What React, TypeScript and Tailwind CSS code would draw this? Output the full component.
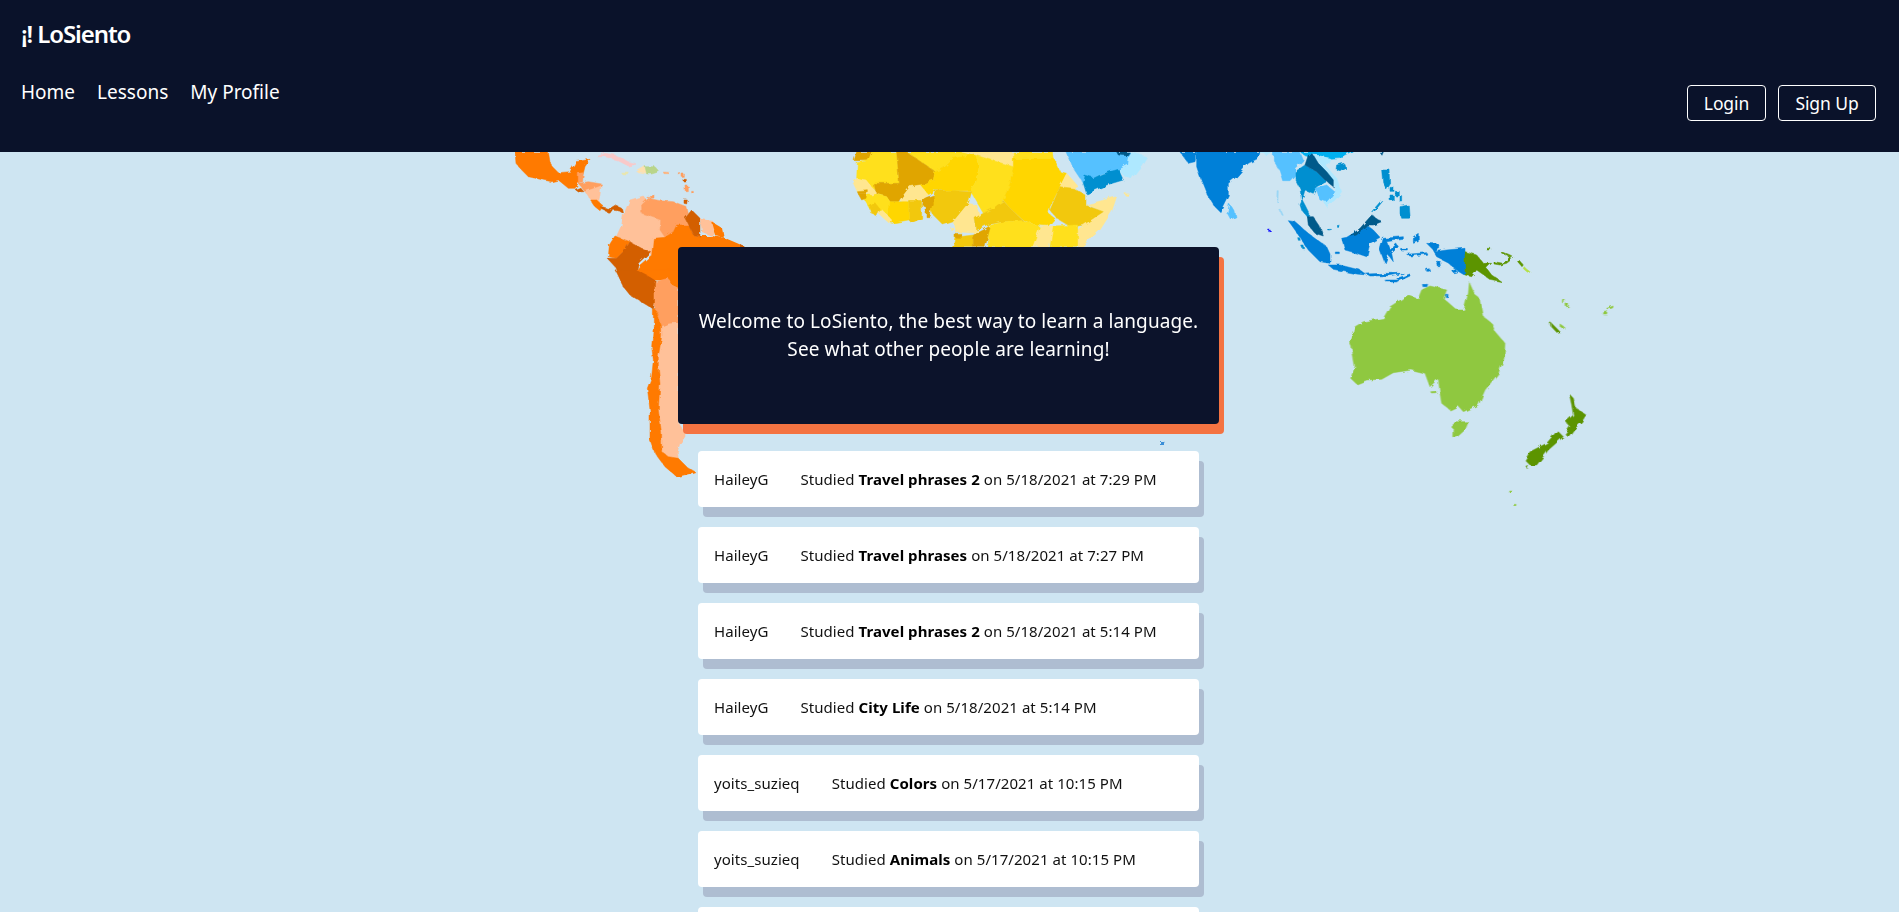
const O = "#ff7a00";
const OD = "#d35f00";
const OM = "#ff9f5f";
const OL = "#ffc199";
const Y = "#ffe01b";
const YM = "#ffd600";
const YG = "#f2c80f";
const YD = "#e0a500";
const YL = "#ffe690";
const B = "#0080d8";
const BM = "#008fd0";
const BD = "#005a8a";
const BL = "#55c1ff";
const BP = "#aee8ff";
const BC = "#00b0f0";
const G = "#8fc83f";
const GD = "#5c9400";

type Shape = [string, string];

// traced from crops, coordinates are crop pixels (3x)
const americas: Shape[] = [
  [O, "45,6 145,6 150,35 162,55 175,68 210,65 228,35 270,28 255,50 250,70 235,100 225,115 205,115 175,90 155,95 130,90 85,80 60,55 48,40"],
  [OM, "235,70 250,68 248,95 235,98"],
  [OD, "225,118 240,112 252,125 235,126"],
  [OM, "235,100 265,95 305,102 295,118 270,120 255,125"],
  [OL, "255,125 275,118 303,108 300,135 295,158 272,150"],
  [O, "272,150 290,150 310,168 300,182 285,170"],
  [OD, "300,170 325,178 345,166 365,175 368,188 355,180 338,178 330,190 310,180"],
  ["#f9c9c9", "290,20 315,10 345,15 385,35 410,42 385,48 350,30 315,20"],
  ["#fde0b0", "410,65 435,50 440,70"],
  ["#b9d58a", "435,50 465,50 478,65 455,72 440,72"],
  ["#e8e6b0", "362,66 385,66 382,72 366,72"],
  ["#ffb27a", "490,66 510,67 508,71 492,71"],
  [OM, "535,68 541,68 541,74 535,74"],
  [OM, "546,72 553,72 553,82 546,82"],
  [OD, "552,88 559,88 559,96 552,96"],
  [OM, "555,105 562,105 562,122 555,122"],
  [OM, "575,124 580,124 580,129 575,129"],
  [OD, "552,150 562,150 560,162 552,160"],
  [OM, "450,140 462,134 462,144 452,145"],
  [OL, "390,150 430,138 440,150 425,170 425,190 482,210 480,240 495,262 460,265 455,315 425,295 390,275 350,258 365,225 370,195"],
  [OM, "425,165 445,145 480,152 520,155 560,170 565,190 555,205 565,225 530,225 520,245 495,262 480,240 482,210 425,190"],
  [O, "600,258 580,255 565,225 530,225 520,245 495,262 460,265 455,315 420,345 410,360 425,385 445,390 600,390"],
  [OD, "575,180 600,205 600,258 580,255 565,225 555,205"],
  [O, "345,258 390,275 375,300 350,325 325,320 328,285"],
  [OD, "390,275 425,295 452,305 415,340 410,360 425,385 440,390 360,390 345,350 322,325 350,325 375,300"],
];

const southCone: Shape[] = [
  [OD, "75,0 140,0 195,30 200,85 190,118 170,105 120,75 100,50"],
  [O, "140,0 265,0 265,55 245,45 235,25 195,30 175,15"],
  [OM, "195,35 235,25 245,45 265,55 265,160 235,162 215,170 205,140 195,115"],
  [OL, "235,162 265,160 265,460 285,490 285,500 270,520 262,545 265,565 235,560 215,545 215,490 205,420 210,340 205,290 205,260 215,200 215,170"],
  [O, "190,118 195,115 205,140 215,170 215,200 205,260 205,290 210,340 205,420 215,490 215,545 235,560 265,565 290,590 315,605 295,612 260,620 225,590 195,550 180,510 180,420 172,355 185,320 190,270 185,230 190,170"],
];

const africa: Shape[] = [
  [YD, "50,6 95,6 85,32 42,32"],
  [Y, "52,38 85,32 95,6 170,6 178,100 105,100 100,118 78,92 50,85"],
  [Y, "200,6 365,6 415,20 340,25 310,55 285,65"],
  [YD, "170,6 200,6 285,65 280,90 240,105 210,110 175,155 150,155 140,140 105,130 100,100 178,100"],
  [YL, "365,6 520,6 520,50 405,15"],
  [YM, "285,65 310,55 340,25 405,15 418,50 405,100 390,122 340,122 285,120 265,135 240,105 280,90"],
  [Y, "405,15 520,50 510,100 490,150 470,170 430,190 410,155 390,120 405,100 418,50"],
  [YM, "520,25 642,25 660,65 680,70 660,110 630,170 625,190 645,205 625,228 590,225 550,210 510,175 490,150 510,100 520,50"],
  [Y, "520,6 640,6 642,25 520,25"],
  [YL, "680,70 715,110 700,115 660,110"],
  [YL, "735,165 830,140 815,185 780,240 725,290 713,290 713,240 730,225 790,185 745,165"],
  [YG, "660,110 700,115 735,135 735,165 790,185 730,225 695,232 650,205 630,180"],
  [YG, "285,122 340,122 395,125 385,160 340,215 310,225 280,195 270,170"],
  [YL, "410,165 420,195 405,205 405,230 420,250 345,245 340,215 385,160"],
  [YG, "490,152 510,175 550,212 490,215 440,225 410,240 405,205 420,195 460,175"],
  [Y, "445,228 490,215 550,212 590,225 600,232 580,292 445,292"],
  [YL, "600,230 640,228 640,255 625,292 578,292"],
  [Y, "640,228 713,225 713,292 630,292"],
  [YG, "345,262 400,255 400,292 338,292"],
  [YD, "445,230 450,235 435,292 400,292 400,255 430,240"],
  [YD, "345,250 365,250 365,262 345,262"],
  [YD, "250,145 280,135 280,165 270,200 258,200 258,170 248,165"],
  [YG, "205,150 245,150 245,205 215,218 205,210"],
  [YL, "180,150 210,110 240,105 265,135 245,150 205,150 195,160"],
  [YM, "145,155 205,155 205,210 155,220 145,195"],
  [Y, "68,140 100,130 140,140 150,155 145,195 120,180 88,175"],
  [YL, "110,185 125,178 155,210 150,222"],
  [YG, "88,170 105,158 118,175 108,195 92,188"],
  [YL, "40,100 50,85 78,90 110,130 95,135 52,125"],
  [YD, "52,125 85,122 85,128 55,132"],
  [YD, "55,132 80,130 78,145 65,150"],
  [BL, "680,6 870,6 865,45 835,60 785,70 760,85 735,80 730,100 700,55"],
  [BP, "870,6 920,20 905,45 875,85 850,75 835,60 865,45"],
  [BM, "735,78 760,85 785,72 835,58 850,90 800,105 740,132 730,100"],
  [BD, "830,6 868,6 860,17 835,15"],
  [YL, "855,131 868,132 866,136 856,136"],
  [YL, "332,232 338,232 338,238 332,238"],
];

const asia: Shape[] = [
  [B, "30,6 80,6 75,35 55,40"],
  [B, "80,6 270,6 265,25 235,40 200,80 175,100 175,135 150,185 135,170 110,130 90,80 80,50"],
  [BL, "178,162 195,185 198,200 182,208 172,190"],
  [BP, "270,6 305,6 290,15"],
  [BC, "390,6 550,6 520,22 480,25 445,15 430,15 420,25"],
  [BL, "310,6 390,6 400,30 375,55 375,75 360,92 338,92 328,60 310,30"],
  [BP, "430,15 480,25 470,50 500,85 515,125 495,150 470,170 462,155 495,125 490,90 460,55 445,35"],
  [BM, "375,65 405,45 440,65 470,95 440,110 430,130 405,120 395,155 390,115 375,85"],
  [BD, "415,15 430,15 445,40 460,55 470,65 490,90 490,110 465,90 440,65 405,45"],
  [BL, "435,115 470,105 495,125 470,155 450,150"],
  [BM, "500,45 522,40 525,52 510,62 498,58"],
  [BD, "628,6 640,6 636,16"],
  [BM, "397,150 405,165 420,195 415,205 395,180 390,165"],
  [BD, "412,200 430,200 450,230 460,258 435,250 415,225"],
  [B, "355,212 375,215 415,250 470,290 480,312 480,340 450,335 415,300 375,240"],
  [B, "530,262 590,225 610,240 630,262 600,280 590,320 560,310 525,300 515,265"],
  [BD, "540,260 570,235 605,195 635,215 610,225 590,225 560,255"],
  [B, "475,345 510,345 570,360 590,375 560,372 490,358"],
  [B, "590,372 640,370 700,370 660,377 600,378"],
  [B, "680,385 720,372 720,378 690,392"],
  [B, "640,265 700,260 700,268 650,275 660,300 680,282 685,290 665,310 670,335 655,315 645,340 630,300"],
  [BM, "635,60 660,60 662,100 650,120 638,95"],
  [BM, "660,112 672,112 672,124 660,124"],
  [BM, "676,124 688,124 688,138 676,138"],
  [BM, "660,135 670,135 670,152 660,152"],
  [BM, "690,140 698,140 698,156 690,156"],
  [BM, "690,170 715,165 718,205 695,205 690,190"],
  [BM, "605,185 635,150 638,154 610,188"],
  ["#9bd7f5", "321,122 325,122 324,155 320,155"],
  ["#9bd7f5", "328,178 332,178 340,196 336,196"],
  ["#1a1aff", "296,240 301,240 301,245 296,245"],
  [BM, "380,260 386,260 388,268 382,268"],
  [BM, "395,288 402,288 404,296 398,296"],
  [BM, "502,226 510,226 510,232 502,232"],
  [BM, "476,238 484,238 484,243 476,243"],
  [B, "496,306 508,306 508,311 496,311"],
];

const newGuinea: Shape[] = [
  [B, "470,70 505,72 510,85 495,95 530,90 585,85 585,165 560,150 530,125 500,110 485,85"],
  [GD, "585,95 620,105 640,130 665,130 650,145 665,165 695,185 660,178 620,150 605,170 585,165"],
  [GD, "672,125 700,130 720,110 725,118 710,130 690,135 672,132"],
  [GD, "695,95 728,110 726,114 694,99"],
  [GD, "745,118 760,135 756,140 743,125"],
  ["#b5e048", "762,140 780,155 776,160 760,146"],
  [B, "430,50 445,40 445,65 430,70"],
  [B, "410,103 470,98 470,103 420,108"],
  [B, "392,85 412,85 412,90 392,90"],
  [B, "500,128 512,125 514,140 502,140"],
  [B, "470,148 478,146 478,154 470,154"],
  [B, "548,152 558,148 560,156 550,158"],
  [GD, "650,85 662,85 662,90 650,90"],
];

const australia: Shape[] = [
  [G, "388,8 405,45 418,55 428,108 455,130 465,155 495,190 492,235 475,280 435,330 415,375 370,395 355,378 330,390 305,370 300,340 295,295 270,320 255,280 215,270 160,278 125,298 80,300 50,312 32,295 45,260 35,200 28,185 45,140 70,125 130,115 150,80 205,45 235,55 245,30 270,18 320,30 310,55 350,90 372,90 385,40"],
  [G, "340,425 385,425 375,450 350,472 338,470"],
  [G, "272,335 290,333 288,338 274,339"],
  [GD, "688,342 700,355 708,385 738,405 725,425 700,450 685,470 675,462 690,440 678,425 700,405 695,375"],
  [GD, "652,452 670,470 625,510 590,555 570,555 555,540 570,515 620,490"],
  [GD, "558,558 566,556 562,566"],
  [GD, "630,125 660,155 650,157 632,138"],
  [G, "660,132 672,140 670,147 660,140"],
  [G, "787,95 802,92 800,102 788,102"],
  [G, "800,85 820,78 818,84 804,88"],
  [G, "667,58 673,58 673,68 667,68"],
  [G, "678,72 686,72 685,80 678,80"],
  [G, "506,630 513,630 512,636 506,636"],
  [G, "522,673 528,673 527,678 522,678"],
  [B, "247,13 263,13 261,20 249,20"],
  [B, "316,43 324,43 324,50 316,50"],
  [B, "135,0 178,0 170,6 140,6"],
];

const extras: Shape[] = [
  [OL, "700,218 712,220 720,232 712,236 702,232"],
  [O, "712,222 722,228 724,238 716,236"],
  [O, "700,236 712,236 725,238 746,247 746,250 700,250"],
  [OD, "740,244 746,247 740,248"],
  ["#3a8fd8", "1160,441 1164,441 1165,445 1160,445"],
];

function MapGroup({ x, y, shapes }: { x: number; y: number; shapes: Shape[] }) {
  return (
    <g transform={`translate(${x} ${y}) scale(0.33333)`}>
      {shapes.map(([fill, points], i) => (
        <polygon key={i} fill={fill} stroke={fill} strokeWidth="1.5" points={points} />
      ))}
    </g>
  );
}

function WorldMap() {
  return (
    <svg className="absolute top-0 left-0" width="1899" height="912" viewBox="0 0 1899 912">
      <defs>
        <filter id="coast" x="0" y="0" width="100%" height="100%">
          <feTurbulence type="fractalNoise" baseFrequency="0.14" numOctaves="2" seed="4" />
          <feDisplacementMap in="SourceGraphic" scale="5" />
          <feGaussianBlur stdDeviation="0.35" />
        </filter>
      </defs>
      <g filter="url(#coast)">
        <MapGroup x={500} y={150} shapes={americas} />
        <MapGroup x={590} y={270} shapes={southCone} />
        <MapGroup x={840} y={150} shapes={africa} />
        <MapGroup x={1170} y={150} shapes={asia} />
        <MapGroup x={1270} y={220} shapes={newGuinea} />
        <MapGroup x={1340} y={280} shapes={australia} />
        {extras.map(([fill, points], i) => (
          <polygon key={i} fill={fill} points={points} />
        ))}
      </g>
    </svg>
  );
}

const activity = [
  { user: "HaileyG", lesson: "Travel phrases 2", date: "5/18/2021", time: "7:29 PM" },
  { user: "HaileyG", lesson: "Travel phrases", date: "5/18/2021", time: "7:27 PM" },
  { user: "HaileyG", lesson: "Travel phrases 2", date: "5/18/2021", time: "5:14 PM" },
  { user: "HaileyG", lesson: "City Life", date: "5/18/2021", time: "5:14 PM" },
  { user: "yoits_suzieq", lesson: "Colors", date: "5/17/2021", time: "10:15 PM" },
  { user: "yoits_suzieq", lesson: "Animals", date: "5/17/2021", time: "10:15 PM" },
];

function Header() {
  return (
    <header className="relative z-10 h-[152px] bg-[#0a122a] text-white px-[21px] font-['Noto_Sans',sans-serif]">
      <div className="pt-[18px] text-[24px] leading-[32px] font-semibold tracking-[-1.1px]">¡! LoSiento</div>
      <div className="flex items-start justify-between mt-[27px]">
        <nav className="flex gap-[22px] text-[19px] leading-[30px]">
          <a>Home</a>
          <a>Lessons</a>
          <a>My Profile</a>
        </nav>
        <div className="flex gap-3 mt-[8px] mr-[2px] text-[17.5px] tracking-[-0.1px]">
          <button className="w-[79px] h-9 border border-white rounded">Login</button>
          <button className="w-[98px] h-9 border border-white rounded">Sign Up</button>
        </div>
      </div>
    </header>
  );
}

function ActivityRow({ user, lesson, date, time }: (typeof activity)[number]) {
  return (
    <div className="w-[501px] h-14 shrink-0 flex items-center gap-8 px-4 bg-white rounded shadow-[5px_10px_0_#aebdd1] text-[15px] tracking-[0.06px] text-[#111]">
      <span>{user}</span>
      <span>
        Studied <b className="font-bold text-black">{lesson}</b> on {date} at {time}
      </span>
    </div>
  );
}

export default function App() {
  return (
    <div className="relative h-screen overflow-hidden bg-[#cee5f2] font-['Noto_Sans',sans-serif]">
      <WorldMap />
      <Header />
      <main className="relative z-10 flex flex-col items-center pr-[2px] pt-[95px]">
        <div className="w-[541px] h-[177px] flex items-center justify-center px-4 pb-[2px] bg-[#0c132b] text-white text-center text-[19px] leading-7 tracking-[0.1px] rounded shadow-[5px_10px_0_#f47342]">
          <p>
            Welcome to LoSiento, the best way to learn a language.
            <br />
            See what other people are learning!
          </p>
        </div>
        <div className="flex flex-col gap-5 mt-[27px]">
          {activity.map((row, i) => (
            <ActivityRow key={i} {...row} />
          ))}
          <div className="w-[501px] h-14 shrink-0 bg-white rounded shadow-[5px_10px_0_#aebdd1]" />
        </div>
      </main>
    </div>
  );
}
